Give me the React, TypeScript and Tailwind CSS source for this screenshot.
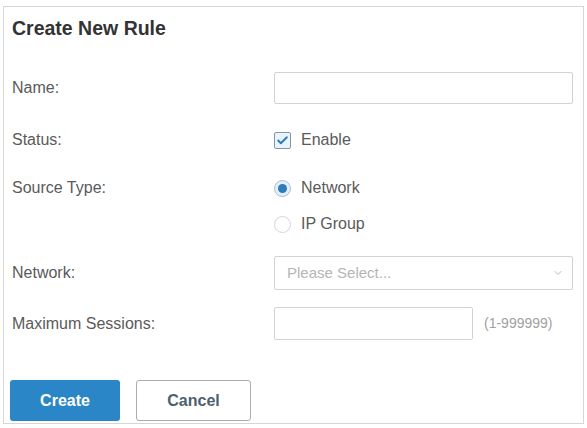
import { Check, ChevronDown } from "lucide-react";

function Label({ children }: { children: React.ReactNode }) {
  return <div className="w-[270px] shrink-0 pl-[8px] text-[16px] text-[#5a5a5a]">{children}</div>;
}

export default function App() {
  return (
    <div className="min-h-[428px] bg-white pt-[6px] pl-[3px] font-['Liberation_Sans',Arial,sans-serif]">
      <div className="flex h-[418px] w-[581px] flex-col border border-[#d6d6d6] bg-white">
        <h2 className="pt-[10px] pl-[8px] text-[19.5px] font-bold leading-[22px] text-[#333]">Create New Rule</h2>

        {/* Name */}
        <div className="mt-[33px] flex h-[32px] items-center">
          <Label>Name:</Label>
          <input className="h-[32px] w-[299px] rounded-[2px] border border-[#d2d2d2] bg-white px-2 text-[15px] outline-none" />
        </div>

        {/* Status */}
        <div className="mt-[26px] flex h-[20px] items-center">
          <Label>Status:</Label>
          <div className="flex items-center gap-[10px]">
            <span className="flex h-[17px] w-[17px] items-center justify-center rounded-[2px] border border-[#7e98ab] bg-[#eaf3fa]">
              <Check className="h-[13px] w-[13px] text-[#2a7cbd]" strokeWidth={3.5} />
            </span>
            <span className="text-[16px] text-[#5a5a5a]">Enable</span>
          </div>
        </div>

        {/* Source Type */}
        <div className="mt-[28px] flex h-[20px] items-center">
          <Label>Source Type:</Label>
          <div className="flex items-center gap-[10px]">
            <span className="flex h-[17px] w-[17px] items-center justify-center rounded-full border border-[#a9c0d2] bg-[#e3eef8]">
              <span className="h-[9px] w-[9px] rounded-full bg-[#2a7cbd]" />
            </span>
            <span className="text-[16px] text-[#5a5a5a]">Network</span>
          </div>
        </div>
        <div className="mt-[16px] flex h-[20px] items-center">
          <Label>{""}</Label>
          <div className="flex items-center gap-[10px]">
            <span className="h-[17px] w-[17px] rounded-full border border-[#d4d4d4] bg-white" />
            <span className="text-[16px] text-[#5a5a5a]">IP Group</span>
          </div>
        </div>

        {/* Network */}
        <div className="mt-[22px] flex h-[34px] items-center">
          <Label>Network:</Label>
          <div className="flex h-[34px] w-[299px] items-center justify-between rounded-[2px] border border-[#d2d2d2] pr-[8px] pl-[12px]">
            <span className="text-[15px] text-[#b5b5b5]">Please Select...</span>
            <ChevronDown className="h-[12px] w-[12px] text-[#b8b8b8]" strokeWidth={2} />
          </div>
        </div>

        {/* Maximum Sessions */}
        <div className="mt-[17px] flex h-[33px] items-center">
          <Label>Maximum Sessions:</Label>
          <input className="h-[33px] w-[199px] rounded-[2px] border border-[#d2d2d2] bg-white px-2 text-[15px] outline-none" />
          <span className="ml-[11px] text-[14px] text-[#a0a0a0]">(1-999999)</span>
        </div>

        {/* Buttons */}
        <div className="mt-[40px] flex gap-[16px] pl-[6px]">
          <button className="h-[41px] w-[110px] rounded-[3px] bg-[#2b86c8] text-[16px] font-bold text-white">Create</button>
          <button className="h-[41px] w-[115px] rounded-[3px] border border-[#a8adb2] bg-white text-[16px] font-bold text-[#4e5f6d]">Cancel</button>
        </div>
      </div>
    </div>
  );
}
